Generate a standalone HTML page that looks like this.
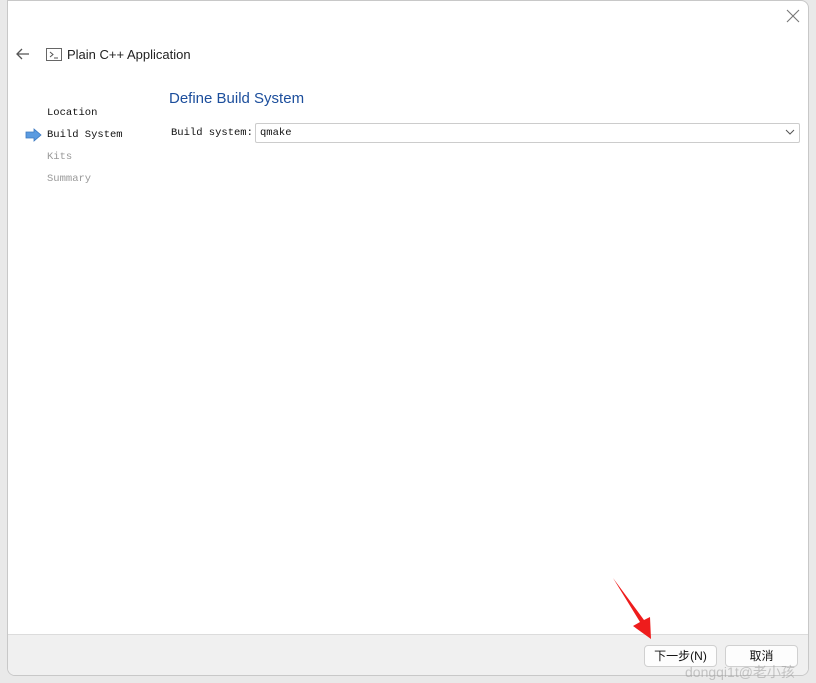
<!DOCTYPE html>
<html><head><meta charset="utf-8"><style>
*{margin:0;padding:0;box-sizing:border-box}
body{width:816px;height:683px;background:#e9e9e9;position:relative;overflow:hidden;font-family:"Liberation Sans","Noto Sans CJK SC",sans-serif}
.win{position:absolute;left:7px;top:0;width:802px;height:676px;background:#fff;border:1px solid #c8c8c8;border-radius:0 8px 8px 8px;overflow:hidden}
.foot{position:absolute;left:0;right:0;top:633px;bottom:0;background:#f0f0f0;border-top:1px solid #dcdcdc}
.mono{font-family:"Liberation Mono","Noto Sans CJK SC",monospace;font-size:10.5px}
.abs{position:absolute}
.btn{position:absolute;top:10px;height:22px;width:73px;background:#fdfdfd;border:1px solid #d0d0d0;border-radius:4px;font-size:12px;text-align:center;line-height:20px;color:#111}
</style></head><body>
<div class="win">
  <svg class="abs" style="left:778px;top:8px" width="14" height="14"><path d="M1 1L13 13M13 1L1 13" stroke="#777" stroke-width="1.1"/></svg>
  <svg class="abs" style="left:7px;top:46px" width="16" height="14"><path d="M14 7H2M7 2L2 7L7 12" stroke="#555" stroke-width="1.3" fill="none"/></svg>
  <svg class="abs" style="left:38px;top:47px" width="16" height="14"><rect x="0.5" y="0.5" width="15" height="12" fill="none" stroke="#666"/><path d="M4 4L7 6.5L4 9M8 10H12" stroke="#555" fill="none"/></svg>
  <div class="abs" style="left:59px;top:46px;font-size:13px;color:#222">Plain C++ Application</div>
  <div class="abs" style="left:161px;top:89px;font-size:15px;color:#1c4e9c">Define Build System</div>
  <div class="abs mono" style="left:39px;top:106px;color:#111">Location</div>
  <div class="abs mono" style="left:39px;top:128px;color:#111">Build System</div>
  <div class="abs mono" style="left:39px;top:150px;color:#999">Kits</div>
  <div class="abs mono" style="left:39px;top:172px;color:#999">Summary</div>
  <svg class="abs" style="left:17px;top:127px" width="17" height="14"><path d="M1 4H9V1L16 7L9 13V10H1Z" fill="#5b9be0" stroke="#3a78c0" stroke-width="0.8"/></svg>
  <div class="abs mono" style="left:163px;top:126px;color:#111">Build system:</div>
  <div class="abs" style="left:247px;top:122px;width:545px;height:20px;border:1px solid #ccc;border-radius:2px"></div>
  <div class="abs mono" style="left:252px;top:126px;color:#111">qmake</div>
  <svg class="abs" style="left:777px;top:128px" width="10" height="7"><path d="M1 1L5 5L9 1" stroke="#555" fill="none"/></svg>
  <div class="foot">
    <div class="btn" style="left:636px">下一步(N)</div>
    <div class="btn" style="left:717px">取消</div>
  </div>
  <svg class="abs" style="left:600px;top:575px;z-index:5" width="50" height="66"><path d="M5 2L32 46L25 50L43 63L42 41L36 44Z" fill="#ee1c1c"/></svg>
</div>
<div class="abs" style="left:685px;top:662px;font-size:14px;color:rgba(150,150,150,0.5)">dongqi1t@老小孩</div>
</body></html>
